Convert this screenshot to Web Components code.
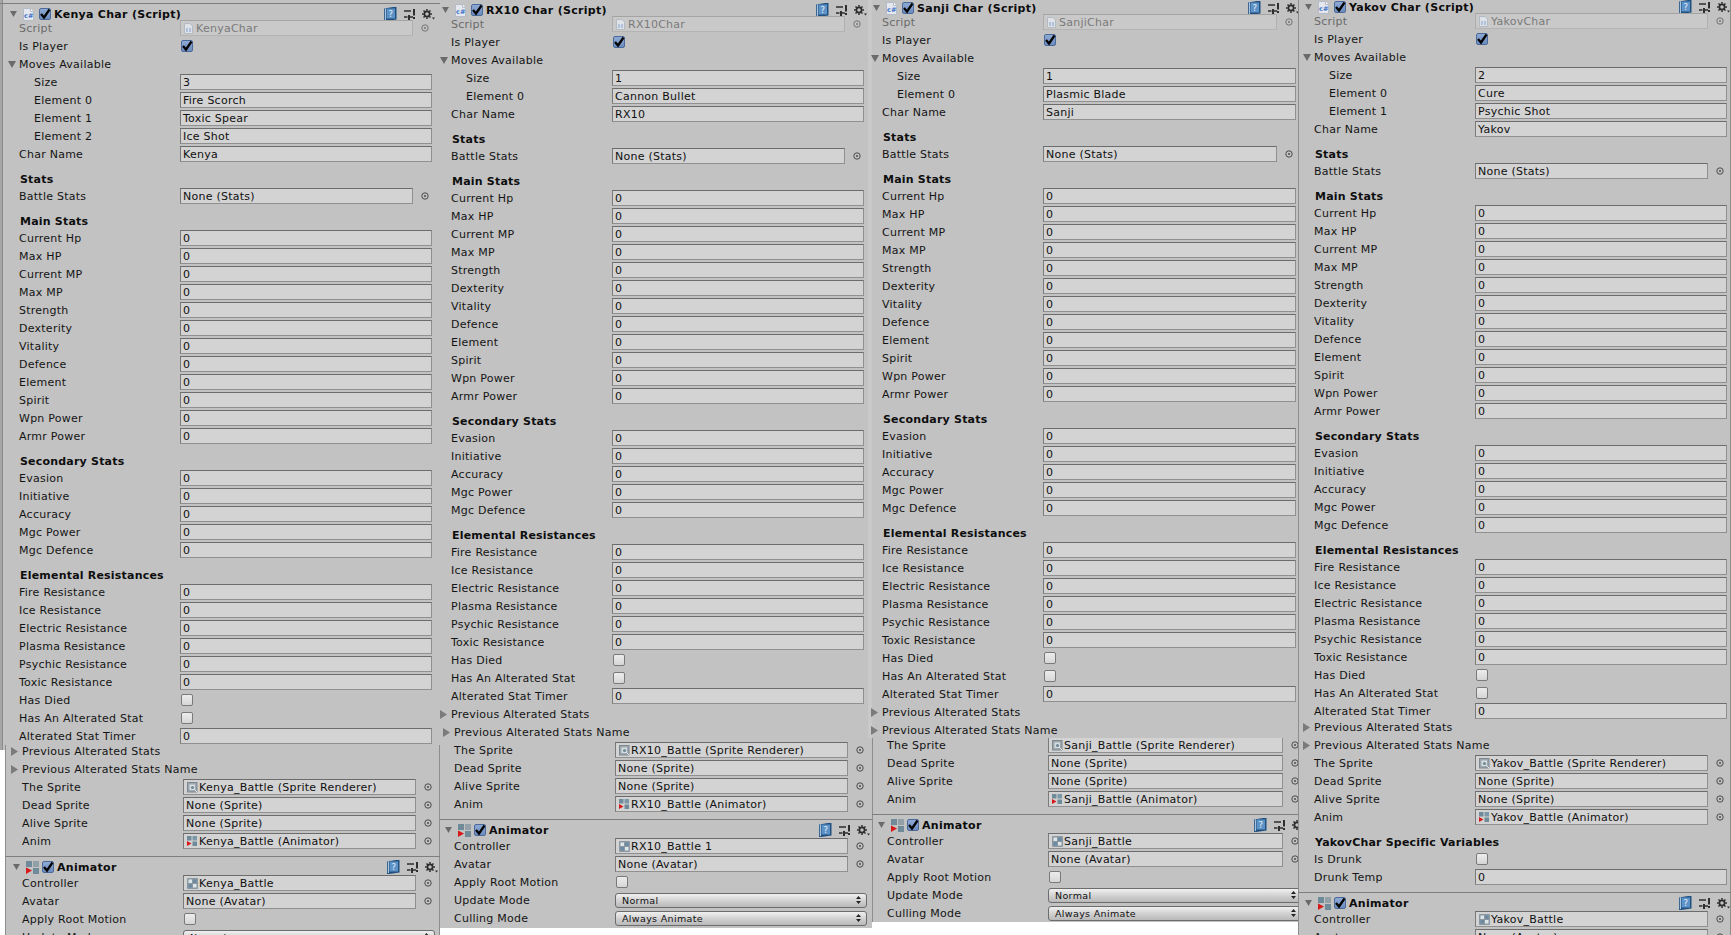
<!DOCTYPE html>
<html>
<head>
<meta charset="utf-8">
<title>Inspector</title>
<style>
  html, body { margin: 0; background: #fff; }
  body { width: 1731px; height: 935px; overflow: hidden; position: relative; font: 11px "DejaVu Sans", sans-serif; letter-spacing: .25px; color: #141414; }
</style>
</head>
<body>
<script>
const ICONS = {
  script: `<svg width="11" height="13" viewBox="0 0 11 13"><path d="M.5.5h7l3 3v9H.5z" fill="#e4e8ee" stroke="#b4bcc8"/><path d="M7.5.5v3h3" fill="#fff" stroke="#b4bcc8"/><text x="1" y="10" font-size="6.5" font-weight="700" font-family="DejaVu Sans" fill="#3f73c8">c#</text></svg>`,
  scriptsm: `<svg width="9" height="11" viewBox="0 0 9 11"><path d="M.5.5h5.500l2.500 2.500v7.500H.5z" fill="#dfe3e8" stroke="#b4bac2"/><path d="M2 6h2M5 6h2M2 8h2M5 8h2" stroke="#7f9fd0"/></svg>`,
  anim: `<svg width="13" height="13" viewBox="0 0 13 13"><rect x="0" y="0" width="6" height="6" fill="#6f8a99"/><rect x="7" y="0" width="6" height="6" fill="#94a0a8"/><rect x="7" y="7" width="6" height="6" fill="#6f8a99"/><path d="M0 6.500l6 3-6 3.500z" fill="#d81818"/></svg>`,
  animsm: `<svg width="10" height="10" viewBox="0 0 10 10"><rect width="4.500" height="4.500" fill="#6f8a99"/><rect x="5.500" width="4.500" height="4.500" fill="#7c98a8"/><rect x="5.500" y="5.500" width="4.500" height="4.500" fill="#6f8a99"/><path d="M0 5l4.500 2.500L0 10z" fill="#d81818"/></svg>`,
  sprite: `<svg width="11" height="11" viewBox="0 0 11 11"><rect x=".5" y=".5" width="9.500" height="9.500" fill="#9ba6ae" stroke="#7e8890"/><rect x="2.500" y="2.500" width="5.500" height="5.500" fill="#d8dde0"/><circle cx="5.500" cy="5.500" r="1.600" fill="#6f8a99"/><path d="M8 8l2.500 2.500" stroke="#e8e8e8"/></svg>`,
  ctrl: `<svg width="11" height="11" viewBox="0 0 11 11"><rect width="11" height="11" rx="1" fill="#8b98a2"/><rect x="1.500" y="1.500" width="3.500" height="3.500" fill="#dfe6ea"/><rect x="6" y="1.500" width="3.500" height="3.500" fill="#6d8aa0"/><rect x="1.500" y="6" width="3.500" height="3.500" fill="#6d8aa0"/><rect x="6" y="6" width="3.500" height="3.500" fill="#dfe6ea"/></svg>`,
  book: `<svg width="13" height="14" viewBox="0 0 13 14"><path d="M0 1.500L9 0h3.500v12.500L2 14H0z" fill="#20507f"/><path d="M.8 1.800L2 1v12l-1.200.3z" fill="#a9c4dc"/><rect x="2.500" y="1.500" width="8.500" height="10" fill="#5d92c6"/><text x="6.800" y="10" text-anchor="middle" font-size="8.500" font-family="DejaVu Sans" fill="#e6f0fa">?</text></svg>`,
  sliders: `<svg width="11" height="11" viewBox="0 0 11 11"><path d="M0 2h7M0 8h3.500M6 8h3" stroke="#2e2e2e" stroke-width="1.400"/><rect x="9" y="0" width="2" height="6.500" fill="#2e2e2e"/><rect x="9" y="8" width="2" height="2" fill="#2e2e2e"/><rect x="4" y="6" width="2" height="5" fill="#2e2e2e"/></svg>`,
  gear: `<svg width="13" height="11" viewBox="0 0 13 11"><g fill="none" stroke="#2c2c2c"><circle cx="5" cy="5" r="2.600" stroke-width="1.700"/><path d="M5 0v1.800M5 8.200V10M0 5h1.800M8.200 5H10M1.500 1.500l1.300 1.300M7.200 7.200l1.300 1.300M1.500 8.500l1.300-1.300M7.200 2.800l1.300-1.300" stroke-width="1.500"/></g><path d="M10 8.500h3L11.500 10.500z" fill="#2c2c2c"/></svg>`,
  dot: `<svg width="8" height="8" viewBox="0 0 8 8"><circle cx="4" cy="4" r="3.200" fill="none" stroke="#4c4c4c"/><circle cx="4" cy="4" r="1" fill="#4c4c4c"/></svg>`,
  down: `<svg width="8" height="7" viewBox="0 0 8 7"><path d="M0 0h8L4 7z" fill="#6a6a6a"/></svg>`,
  right: `<svg width="7" height="9" viewBox="0 0 7 9"><path d="M0 0l7 4.500L0 9z" fill="#7b7b7b"/></svg>`,
  updown: `<svg width="5" height="8" viewBox="0 0 5 8"><path d="M2.500 0L5 3H0zM2.500 8L0 5h5z" fill="#222"/></svg>`,
  tick: `<svg width="12" height="12" viewBox="0 0 12 12"><path d="M2 6l3 3.500L10.500 1.500" fill="none" stroke="#050505" stroke-width="2.300"/></svg>`
};

// one cut-out of the collage, placed on the free canvas
class UePiece extends HTMLElement {
  constructor() {
    super();
    this.attachShadow({ mode: "open" });
    this.shadowRoot.innerHTML = `
    <style>
    :host { position: absolute; display: block; overflow: hidden; background: #c2c2c2; box-sizing: border-box; }
    :host([strip]) { background: linear-gradient(90deg, #a6a6a6 2px, #8b8b8b 2px, #8b8b8b 3px, #c2c2c2 3px); }
    :host([edge]) { box-shadow: inset 1px 0 #8d8d8d, inset -1px 0 #8d8d8d; }
    :host([pale]) { box-shadow: inset 4px 0 #c9c9c9; }
    .body { margin-top: var(--pt); }
    </style>
    <div class="body"><slot></slot></div>`;
  }
  connectedCallback() {
    let a = (n) => this.getAttribute(n);
    this.style.cssText = `left:${a("x")}px;top:${a("y")}px;width:${a("w")}px;height:${a("h")}px;`
      + `--lx:${a("lx")}px;--fx:${a("fx")}px;--rp:${a("rp")}px;--pt:${a("pt") || 0}px;`;
  }
}

class UeHeader extends HTMLElement {
  constructor() {
    super();
    this.attachShadow({ mode: "open" });
  }
  connectedCallback() {
    let icon = this.getAttribute("icon") || "script";
    this.shadowRoot.innerHTML = `
    <style>
    :host { display: block; border-top: 1px solid #7e7e7e; height: 15px; margin-left: 0; }
    :host([tall]) { height: 17px; margin-top: 6px; }
    .h { display: flex; align-items: center; height: 10px; margin-top: 5px; padding-left: calc(var(--lx) - 9px); margin-right: var(--rp); }
    .arrow { width: 7px; display: flex; margin-right: 6px; }
    .arrow svg { width: 7px; height: 6px; }
    .ic { width: 13px; display: flex; margin-right: 3px; }
    .check { width: 12px; height: 12px; flex: none; border: 1px solid #4b6a99; border-radius: 2px; box-sizing: border-box; background: linear-gradient(#8ea9d4, #6c8cc0); display: flex; margin-right: 3px; }
    .check svg { margin: -1px; }
    .t { font: bold 11px "DejaVu Sans", sans-serif; letter-spacing: .3px; color: #0c0c0c; white-space: nowrap; }
    .tools { margin-left: auto; display: flex; align-items: center; margin-right: -3px; }
    .tools svg { display: block; }
    .book { margin-right: 7px; }
    .sl { margin-right: 7px; }
    </style>
    <div class="h">
      <span class="arrow">${ICONS.down}</span>
      <span class="ic">${ICONS[icon]}</span>
      <span class="check">${ICONS.tick}</span>
      <span class="t">${this.getAttribute("title")}</span>
      <span class="tools"><span class="book">${ICONS.book}</span><span class="sl">${ICONS.sliders}</span><span>${ICONS.gear}</span></span>
    </div>`;
  }
}

class UeSection extends HTMLElement {
  constructor() {
    super();
    this.attachShadow({ mode: "open" });
  }
  connectedCallback() {
    this.shadowRoot.innerHTML = `
    <style>
    :host { display: block; height: 24px; padding: 10px 0 0 calc(var(--lx) + 1px); box-sizing: border-box; font: bold 11px/14px "DejaVu Sans", sans-serif; letter-spacing: .2px; color: #0e0e0e; white-space: nowrap; }
    </style><slot></slot>`;
  }
}

class UeRow extends HTMLElement {
  constructor() {
    super();
    this.attachShadow({ mode: "open" });
  }
  connectedCallback() {
    let a = (n) => this.getAttribute(n);
    let type = a("type") || "int", value = a("value") || "";
    let control = "";
    if (type == "int") control = `<span class="f">${value}</span>`;
    if (type == "obj") {
      let ic = a("icon") ? `<span class="oi">${ICONS[a("icon")]}</span>` : "";
      control = `<span class="f ${a("icon") ? "hasicon" : ""}">${ic}${value}</span><span class="dot">${ICONS.dot}</span>`;
    }
    if (type == "check") control = `<span class="c ${a("on") != null ? "on" : ""}">${a("on") != null ? ICONS.tick : ""}</span>`;
    if (type == "select") control = `<span class="s">${value}<span class="ud">${ICONS.updown}</span></span>`;
    let arrow = "";
    if (a("fold")) arrow = `<span class="ar">${a("fold") == "open" ? ICONS.down : ICONS.right}</span>`;
    this.shadowRoot.innerHTML = `
    <style>
    :host { display: block; height: 18px; margin-right: var(--rp); }
    :host([muted]) .l { color: #6b6b6b; }
    :host([muted]) .f { background: #c9c9c9; color: #7a7a7a; border-color: #a4a4a4 #b0b0b0 #b4b4b4 #acacac; }
    :host([muted]) .dot { opacity: .65; }
    .r { display: flex; align-items: center; height: 18px; padding-left: var(--lx); white-space: nowrap; }
    .l { flex: 0 0 calc(var(--fx) - var(--lx)); box-sizing: border-box; display: flex; align-items: center; }
    :host([indent]) .l { padding-left: 15px; }
    .ar { flex: none; width: 8px; margin: 0 3px 0 -11px; display: flex; align-items: center; }
    .f { flex: 1; min-width: 0; height: 16px; box-sizing: border-box; padding: 1px 0 0 2px; background: #d3d3d3; border: 1px solid; border-color: #6c6c6c #8f8f8f #909090 #7a7a7a; overflow: hidden; display: flex; align-items: center; color: #101010; }
    .f.hasicon { padding-left: 15px; position: relative; }
    .oi { position: absolute; left: 3px; top: 2px; display: flex; }
    .dot { flex: none; width: 19px; display: flex; justify-content: center; padding-left: 4px; box-sizing: border-box; }
    .c { width: 12px; height: 12px; margin-left: 1px; box-sizing: border-box; border: 1px solid #7a7a7a; border-radius: 2px; background: linear-gradient(#ececec, #d6d6d6); display: flex; }
    .c.on { background: linear-gradient(#8ea9d4, #6c8cc0); border-color: #4b6a99; }
    .c svg { margin: -1px; }
    .s { flex: 1; height: 15px; box-sizing: border-box; padding-left: 6px; font-size: 9.5px; line-height: 13px; letter-spacing: .35px; border: 1px solid #6c6c6c; border-radius: 3px; background: linear-gradient(#f0f0f0, #cfcfcf 55%, #b9b9b9); display: flex; align-items: center; color: #111; }
    .ud { margin-left: auto; margin-right: 5px; display: flex; }
    </style>
    <div class="r"><span class="l">${arrow}<span>${a("label")}</span></span>${control}</div>`;
    if (a("nudge")) this.style.marginTop = a("nudge") + "px";
  }
}

customElements.define("ue-piece", UePiece);
customElements.define("ue-header", UeHeader);
customElements.define("ue-section", UeSection);
customElements.define("ue-row", UeRow);

function ints(labels) {
  return labels.map(l => `<ue-row label="${l}" value="0"></ue-row>`).join("");
}

function upper(name, cls, moves) {
  let h = `<ue-header title="${name} Char (Script)"></ue-header>
  <ue-row muted type="obj" icon="scriptsm" label="Script" value="${cls}"></ue-row>
  <ue-row type="check" on label="Is Player"></ue-row>
  <ue-row type="none" fold="open" label="Moves Available"></ue-row>
  <ue-row indent label="Size" value="${moves.length}"></ue-row>`;
  moves.forEach((m, i) => { h += `<ue-row indent label="Element ${i}" value="${m}"></ue-row>`; });
  h += `<ue-row label="Char Name" value="${name}"></ue-row>
  <ue-section>Stats</ue-section>
  <ue-row type="obj" label="Battle Stats" value="None (Stats)"></ue-row>
  <ue-section>Main Stats</ue-section>`;
  h += ints(["Current Hp", "Max HP", "Current MP", "Max MP", "Strength", "Dexterity", "Vitality", "Defence", "Element", "Spirit", "Wpn Power", "Armr Power"]);
  h += `<ue-section>Secondary Stats</ue-section>`;
  h += ints(["Evasion", "Initiative", "Accuracy", "Mgc Power", "Mgc Defence"]);
  h += `<ue-section>Elemental Resistances</ue-section>`;
  h += ints(["Fire Resistance", "Ice Resistance", "Electric Resistance", "Plasma Resistance", "Psychic Resistance", "Toxic Resistance"]);
  h += `<ue-row type="check" label="Has Died"></ue-row>
  <ue-row type="check" label="Has An Alterated Stat"></ue-row>
  <ue-row label="Alterated Stat Timer" value="0"></ue-row>`;
  return h;
}

const PREV = `<ue-row type="none" fold="closed" label="Previous Alterated Stats"></ue-row>`;
const PREVN = `<ue-row type="none" fold="closed" label="Previous Alterated Stats Name"></ue-row>`;

function sprites(name) {
  return `<ue-row type="obj" icon="sprite" label="The Sprite" value="${name}_Battle (Sprite Renderer)"></ue-row>
  <ue-row type="obj" label="Dead Sprite" value="None (Sprite)"></ue-row>
  <ue-row type="obj" label="Alive Sprite" value="None (Sprite)"></ue-row>
  <ue-row type="obj" icon="animsm" label="Anim" value="${name}_Battle (Animator)"></ue-row>`;
}

function animator(ctrl) {
  return `<ue-header tall icon="anim" title="Animator"></ue-header>
  <ue-row type="obj" icon="ctrl" label="Controller" value="${ctrl}"></ue-row>
  <ue-row type="obj" label="Avatar" value="None (Avatar)"></ue-row>
  <ue-row type="check" label="Apply Root Motion"></ue-row>
  <ue-row type="select" label="Update Mode" value="Normal"></ue-row>
  <ue-row type="select" label="Culling Mode" value="Always Animate"></ue-row>`;
}

const pieces = [
  { x: 0, y: 0, w: 440, h: 750, lx: 19, fx: 180, rp: 8, pt: 3, strip: 1, html: upper("Kenya", "KenyaChar", ["Fire Scorch", "Toxic Spear", "Ice Shot"]) },
  { x: 5, y: 745, w: 435, h: 190, lx: 17, fx: 178, rp: 5, pt: -3, edge: 1, html: PREV + PREVN + sprites("Kenya") + animator("Kenya_Battle") },
  { x: 440, y: 723, w: 432, h: 205, lx: 14, fx: 175, rp: 5, html: PREVN + sprites("RX10") + animator("RX10_Battle 1") },
  { x: 440, y: 0, w: 428, h: 723, lx: 11, fx: 172, rp: 4, pt: -1, html: upper("RX10", "RX10Char", ["Cannon Bullet"]) + PREV },
  { x: 872, y: 736, w: 427, h: 186, lx: 15, fx: 176, rp: -3, edge: 1, html: sprites("Sanji") + animator("Sanji_Battle") },
  { x: 868, y: 0, w: 431, h: 738, lx: 14, fx: 175, rp: 3, pt: -3, pale: 1, html: upper("Sanji", "SanjiChar", ["Plasmic Blade"]) + PREV + PREVN },
  { x: 1298, y: 0, w: 433, h: 935, lx: 16, fx: 177, rp: 4, pt: -4, edge: 1, html: upper("Yakov", "YakovChar", ["Cure", "Psychic Shot"])
      + `<ue-row nudge="-2" type="none" fold="closed" label="Previous Alterated Stats"></ue-row>` + PREVN + sprites("Yakov")
      + `<ue-section>YakovChar Specific Variables</ue-section>
         <ue-row type="check" label="Is Drunk"></ue-row>
         <ue-row label="Drunk Temp" value="0"></ue-row>` + animator("Yakov_Battle") }
];

for (let p of pieces) {
  let el = document.createElement("ue-piece");
  for (let k of ["x", "y", "w", "h", "lx", "fx", "rp", "pt"]) el.setAttribute(k, p[k] || 0);
  if (p.strip) el.setAttribute("strip", "");
  if (p.edge) el.setAttribute("edge", "");
  if (p.pale) el.setAttribute("pale", "");
  el.innerHTML = p.html;
  document.body.appendChild(el);
}
</script>
</body>
</html>
